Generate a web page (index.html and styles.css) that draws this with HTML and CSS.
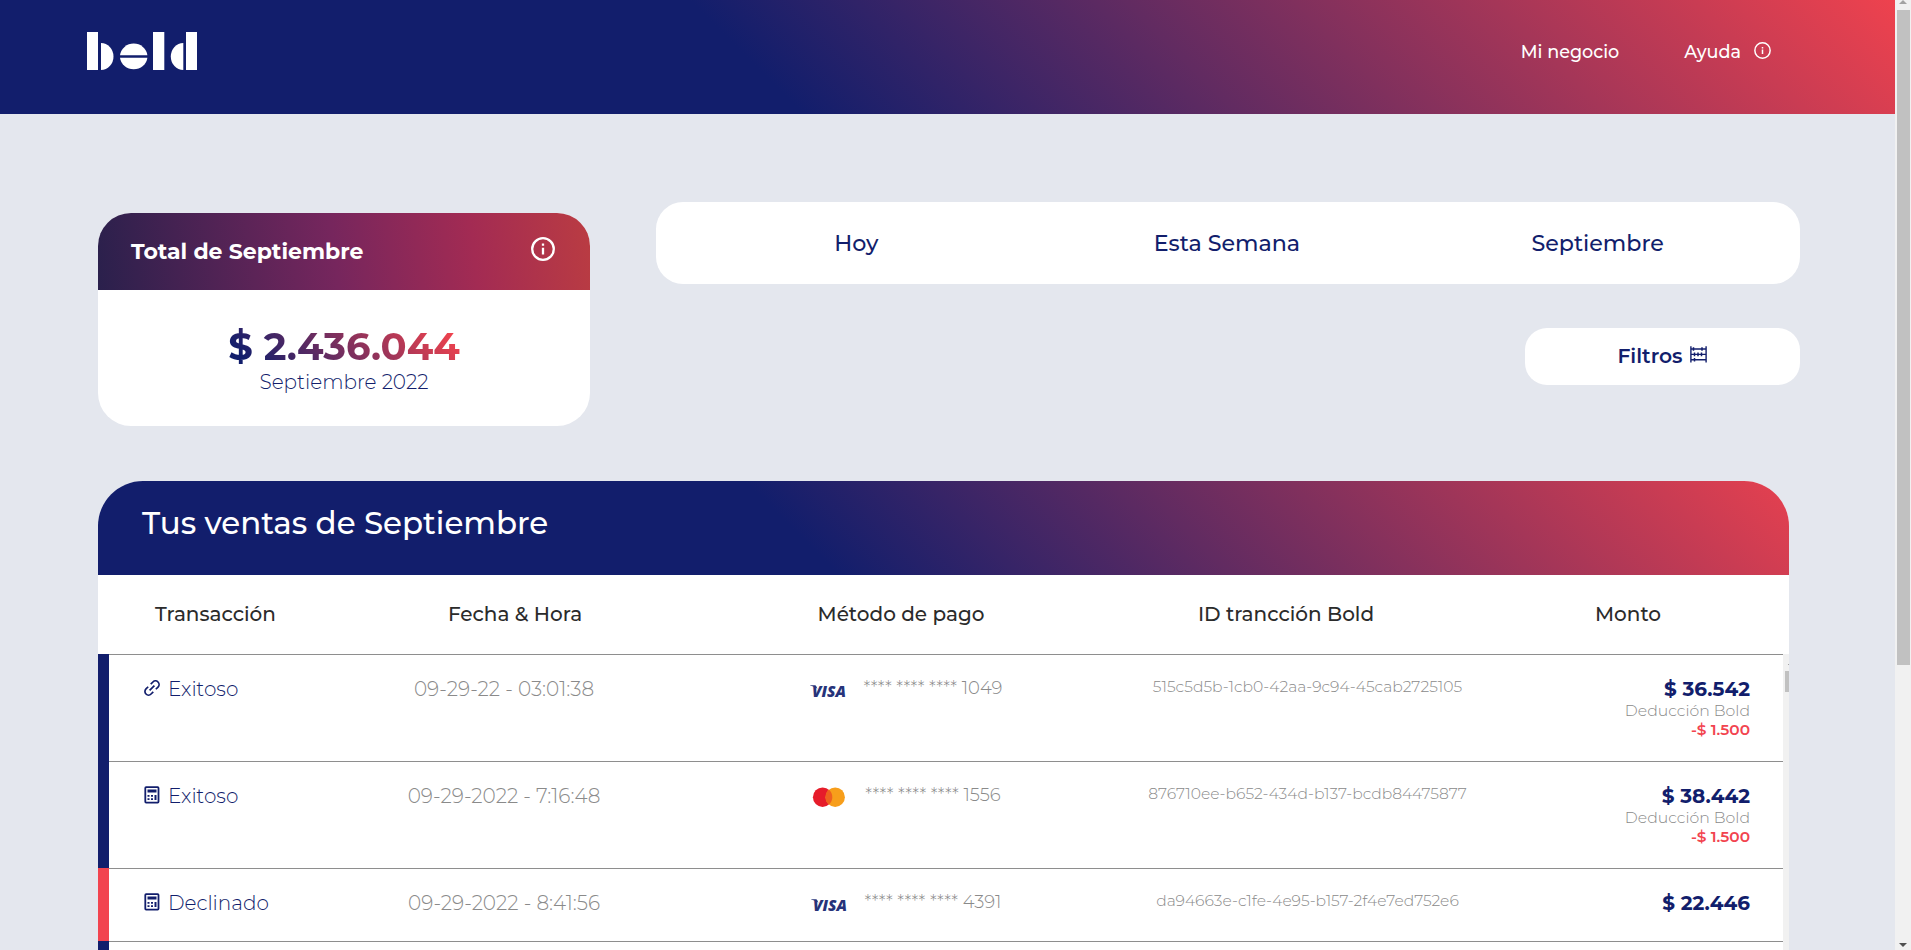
FILE: index.html
```html
<!DOCTYPE html>
<html lang="es">
<head>
<meta charset="utf-8">
<title>Bold</title>
<link rel="stylesheet" href="styles.css">
</head>
<body>
<div class="page">
  <header class="topbar">
    <svg class="logo" viewBox="0 0 110 38" role="img" aria-label="bold">
      <rect x="0" y="0" width="11" height="38"/>
      <path d="M14 11a12.5 13.5 0 0 1 0 27z"/>
      <path d="M33 23.2a13.8 13.2 0 0 1 27.4 0z"/>
      <path d="M33 25.7a13.8 13.2 0 0 0 27.4 0z"/>
      <rect x="66" y="0" width="11.3" height="38"/>
      <path d="M96.3 11a12.5 13.5 0 0 0 0 27z"/>
      <rect x="99" y="0" width="11" height="38"/>
    </svg>
    <nav class="nav">
      <a class="nav-link">Mi negocio</a>
      <a class="nav-link nav-help">Ayuda
        <svg class="info-sm" viewBox="0 0 24 24"><circle cx="12" cy="12" r="10.8"/><path d="M12 10.5v6.5M12 7v2"/></svg>
      </a>
    </nav>
  </header>

  <main class="main">
    <section class="overview">
      <article class="summary">
        <div class="summary-head">
          <h2 class="summary-title">Total de Septiembre</h2>
          <svg class="info-lg" viewBox="0 0 24 24"><circle cx="12" cy="12" r="10.8"/><path d="M12 10.8v6.7M12 6.5v2.2"/></svg>
        </div>
        <div class="summary-body">
          <p class="summary-amount">$ 2.436.044</p>
          <p class="summary-period">Septiembre 2022</p>
        </div>
      </article>
      <div class="controls">
        <div class="tabs"><span>Hoy</span><span>Esta Semana</span><span>Septiembre</span></div>
        <button class="filter">Filtros
          <svg class="filter-icon" viewBox="0 0 17 17"><path d="M.9.3v16.2M16.1.3v16.2M1 3h15M1 8.4h15M1 13.8h15"/><path class="beads" d="M3.5 1.2v3.6M12 1.2v3.6M4.5 6.6v3.6M8 6.6v3.6M11.5 6.6v3.6M4.5 12v3.6"/></svg>
        </button>
      </div>
    </section>

    <section class="sales">
      <h2 class="sales-title">Tus ventas de Septiembre</h2>
      <div class="columns">
        <span>Transacción</span><span>Fecha &amp; Hora</span><span>Método de pago</span><span>ID trancción Bold</span><span>Monto</span>
      </div>
      <div class="list">
        <div class="rows">
          <div class="row">
            <div class="cells">
              <div class="status"><svg class="status-icon" viewBox="0 0 16 18"><g class="link" transform="rotate(-45 8 9)"><path d="M9.8 5.4h3.1a3.6 3.6 0 0 1 0 7.2H9.8M6.2 12.6H3.1a3.6 3.6 0 0 1 0-7.2h3.1M4.6 9h6.8"/></g></svg>Exitoso</div>
              <div class="date">09-29-22 - 03:01:38</div>
              <div class="method"><svg class="brand" viewBox="0 0 36 20"><path class="visa-wing" d="M0 4.2h5.500l2 3.500Q4.500 5.500 0 4.600z"/><text class="visa" x="2" y="16" textLength="34" lengthAdjust="spacingAndGlyphs">VISA</text></svg>**** **** **** 1049</div>
              <div class="txid">515c5d5b-1cb0-42aa-9c94-45cab2725105</div>
              <div class="amount"><b>$ 36.542</b><span>Deducción Bold</span><em>-$ 1.500</em></div>
            </div>
          </div>
          <div class="row">
            <div class="cells">
              <div class="status"><svg class="status-icon" viewBox="0 0 16 18"><rect class="frame" x="1.3" y="1.1" width="13.2" height="15.5" rx=".8"/><path class="keys" d="M3.5 3.5h9v3h-9zM3.5 9h2v1.8h-2zM7 9h2v1.8H7zM10.5 9h2v5h-2zM3.5 12.2h2V14h-2zM7 12.2h2V14H7z"/></svg>Exitoso</div>
              <div class="date">09-29-2022 - 7:16:48</div>
              <div class="method"><svg class="brand" viewBox="0 0 36 20"><circle class="mc-red" cx="11.6" cy="9.2" r="9.7"/><circle class="mc-gold" cx="24.2" cy="9.2" r="9.7"/><path class="mc-mix" d="M17.9 1.8a9.7 9.7 0 0 1 0 14.8a9.7 9.7 0 0 1 0-14.8z"/></svg>**** **** **** 1556</div>
              <div class="txid">876710ee-b652-434d-b137-bcdb84475877</div>
              <div class="amount"><b>$ 38.442</b><span>Deducción Bold</span><em>-$ 1.500</em></div>
            </div>
          </div>
          <div class="row row-declined">
            <div class="cells">
              <div class="status"><svg class="status-icon" viewBox="0 0 16 18"><rect class="frame" x="1.3" y="1.1" width="13.2" height="15.5" rx=".8"/><path class="keys" d="M3.5 3.5h9v3h-9zM3.5 9h2v1.8h-2zM7 9h2v1.8H7zM10.5 9h2v5h-2zM3.5 12.2h2V14h-2zM7 12.2h2V14H7z"/></svg>Declinado</div>
              <div class="date">09-29-2022 - 8:41:56</div>
              <div class="method"><svg class="brand" viewBox="0 0 36 20"><path class="visa-wing" d="M0 4.2h5.5l2 3.5Q4.5 5.5 0 4.6z"/><text class="visa" x="2" y="16" textLength="34" lengthAdjust="spacingAndGlyphs">VISA</text></svg>**** **** **** 4391</div>
              <div class="txid">da94663e-c1fe-4e95-b157-2f4e7ed752e6</div>
              <div class="amount"><b>$ 22.446</b></div>
            </div>
          </div>
          <div class="row"><div class="cells"></div></div>
        </div>
        <div class="list-scroll"><i class="list-arrow"></i><i class="list-thumb"></i></div>
      </div>
    </section>
  </main>
</div>
<div class="scrollbar">
  <svg class="arrow arrow-up" viewBox="0 0 8 4"><path d="M0 4 4 0l4 4z"/></svg>
  <i class="thumb"></i>
  <svg class="arrow arrow-down" viewBox="0 0 8 4"><path d="M0 0h8L4 4z"/></svg>
</div>
</body>
</html>
```
FILE: styles.css
```css
:root {
  --navy: #121e6c;
  --red: #f2444f;
  --grey: #8a8a8a;
}

* { box-sizing: border-box; margin: 0; padding: 0; }

body {
  display: flex;
  height: 950px;
  overflow: hidden;
  background: #e4e7ee;
  color: var(--navy);
  font-family: Montserrat, Inter, "Open Sans", sans-serif;
}

.page { flex: 1; min-width: 0; height: 950px; overflow: hidden; }

/* Top bar */
.topbar {
  display: flex;
  align-items: center;
  justify-content: space-between;
  height: 114px;
  padding: 0 124px 12px 87px;
  background: linear-gradient(45deg, #121e6c 40%, #ee424e);
}
.logo { width: 110px; height: 38px; fill: #fff; }
.nav { display: flex; gap: 65px; color: #fff; font-size: 17.6px; font-weight: 500; padding-top: 1px; }
.nav-help { display: flex; align-items: center; gap: 13px; }
.info-sm { width: 17px; height: 17px; margin-top: -2px; fill: none; stroke: #fff; stroke-width: 2.1; }

/* Overview */
.main { padding: 88px 95px 0 98px; }
.overview { display: flex; gap: 66px; }
.summary {
  width: 492px;
  height: 213px;
  margin-top: 11px;
  border-radius: 33px;
  overflow: hidden;
  background: #fff;
}
.summary-head {
  display: flex;
  align-items: center;
  justify-content: space-between;
  height: 77px;
  padding: 0 35px 0 33px;
  color: #fff;
  background: linear-gradient(83deg, #2a204c 0%, #76265d 48%, #a32b53 76%, #ba3c42 100%);
}
.summary-title { font-size: 22px; font-weight: 700; }
.info-lg { width: 24px; height: 24px; margin-top: -5px; fill: none; stroke: #fff; stroke-width: 2.3; }
.summary-body { display: flex; flex-direction: column; align-items: center; padding-top: 33px; }
.summary-amount {
  font-size: 38.5px;
  font-weight: 700;
  line-height: 47px;
  color: transparent;
  background: linear-gradient(45deg, #121e6c 10%, #ee424e 93%);
  background-clip: text;
  -webkit-background-clip: text;
}
.summary-period { font-size: 20px; font-weight: 300; line-height: 24px; }

.controls { flex: 1; display: flex; flex-direction: column; }
.tabs {
  display: grid;
  grid-template-columns: repeat(3, 1fr);
  align-items: center;
  height: 82px;
  padding: 0 17px 0 15px;
  border-radius: 27px;
  background: #fff;
  font-size: 22.2px;
  font-weight: 500;
  text-align: center;
}
.filter {
  display: flex;
  align-items: center;
  justify-content: center;
  gap: 7px;
  align-self: flex-end;
  width: 275px;
  height: 57px;
  margin-top: 44px;
  padding: 0 1px 2px 0;
  border: 0;
  border-radius: 22px;
  background: #fff;
  color: var(--navy);
  font: 600 20.3px Montserrat, Inter, "Open Sans", sans-serif;
}
.filter-icon { width: 17px; height: 17px; margin-top: -3px; fill: none; stroke: var(--navy); stroke-width: 1.4; }
.beads { stroke-width: 1.5; }

/* Sales table */
.sales {
  width: 1691px;
  margin-top: 55px;
  border-radius: 45px 45px 0 0;
  overflow: hidden;
  background: #fff;
}
.sales-title {
  height: 94px;
  padding: 23px 44px 0;
  background: linear-gradient(45deg, #121e6c 41.5%, #ee424e 102.5%);
  color: #fff;
  font-size: 30.9px;
  font-weight: 500;
  line-height: 38px;
}
.columns {
  display: grid;
  grid-template-columns: 235px 364px 408px 362px 322px;
  align-items: center;
  height: 79px;
  padding-bottom: 2px;
  color: #2b2b2b;
  font-size: 20px;
  font-weight: 550;
  text-align: center;
}
.list { display: flex; height: 296px; overflow: hidden; }
.rows { flex: 1; }
.row { display: flex; min-height: 73px; }
.row::before { content: ""; width: 11px; background: var(--navy); }
.row-declined::before { background: var(--red); }
.cells {
  flex: 1;
  display: grid;
  grid-template-columns: 205px 380px 424px 379px 286px;
  align-items: start;
  padding: 22px 0;
  border-top: 1px solid #8e8e8e;
  color: var(--grey);
  font-weight: 300;
  text-align: center;
}
.status { display: flex; align-items: center; gap: 8px; padding-left: 35px; color: var(--navy); font-size: 20px; line-height: 24px; }
.status-icon { width: 16px; height: 18px; margin-top: -3px; overflow: visible; }
.link { fill: none; stroke: var(--navy); stroke-width: 1.7; }
.frame { fill: none; stroke: var(--navy); stroke-width: 1.8; }
.keys { fill: var(--navy); }
.date { font-size: 20px; line-height: 24px; }
.method { display: flex; justify-content: center; gap: 18px; font-size: 18px; line-height: 22px; }
.brand { width: 36px; height: 20px; margin-top: 4px; overflow: visible; }
.visa { fill: #26337a; font: italic 800 16.5px "Open Sans", sans-serif; }
.visa-wing { fill: #26337a; }
.mc-red { fill: #e61c2a; }
.mc-gold { fill: #f79e1b; }
.mc-mix { fill: #ee611f; }
.txid { font-size: 15.56px; line-height: 19px; }
.amount { display: flex; flex-direction: column; align-items: flex-end; padding-right: 33px; font-size: 15.7px; line-height: 19px; }
.amount b { color: var(--navy); font-size: 20px; font-weight: 700; line-height: 24px; }
.amount em { color: var(--red); font-size: 15.4px; font-style: normal; font-weight: 600; }
.list-scroll { width: 6px; padding: 10px 0 0 2px; background: #f1f1f1; }
.list-arrow { display: block; width: 1px; height: 1px; margin-left: 3px; background: #a3a3a3; }
.list-thumb { display: block; height: 21px; margin-top: 6px; background: #c1c1c1; }

/* Window scrollbar */
.scrollbar { display: flex; flex-direction: column; align-items: center; width: 16px; height: 950px; background: #f1f1f1; }
.arrow { width: 8px; height: 4px; }
.arrow-up { fill: #a3a3a3; }
.arrow-down { margin: auto 0 3px; fill: #505050; }
.thumb { width: 13px; height: 655px; margin: 6px -1px 0 0; background: #c1c1c1; }
```
